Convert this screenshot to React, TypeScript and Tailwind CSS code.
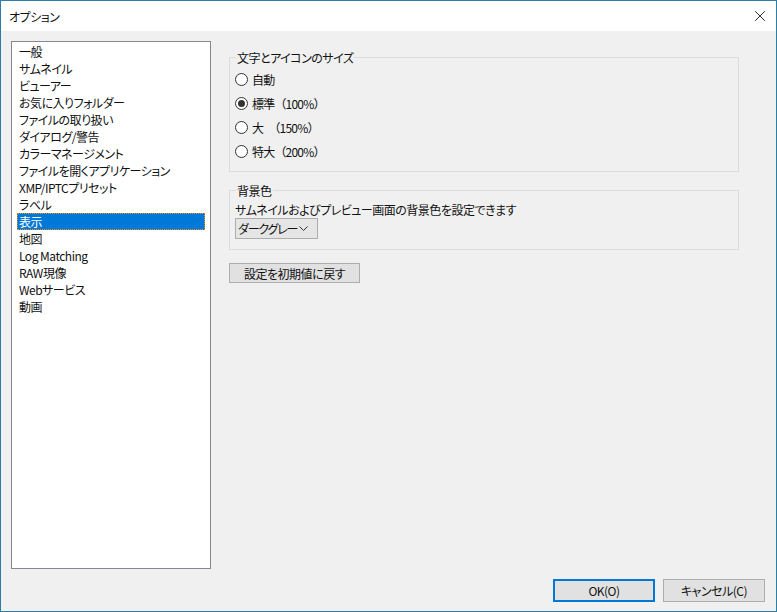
import { X } from "lucide-react";

const menuItems = [
  "一般",
  "サムネイル",
  "ビューアー",
  "お気に入りフォルダー",
  "ファイルの取り扱い",
  "ダイアログ/警告",
  "カラーマネージメント",
  "ファイルを開くアプリケーション",
  "XMP/IPTCプリセット",
  "ラベル",
  "表示",
  "地図",
  "Log Matching",
  "RAW現像",
  "Webサービス",
  "動画",
];

const sizes = [
  { label: "自動", checked: false },
  { label: "標準（100%）", checked: true },
  { label: "大　（150%）", checked: false },
  { label: "特大（200%）", checked: false },
];

const Radio = ({ label, checked }: { label: string; checked: boolean }) => (
  <div className="flex items-center h-[24px]">
    <span className="w-[13px] h-[13px] rounded-full border border-[#333333] bg-white flex items-center justify-center shrink-0">
      {checked && <span className="w-[7px] h-[7px] rounded-full bg-[#333333]" />}
    </span>
    <span className="ml-[4px] whitespace-pre [font-feature-settings:normal] tracking-[-0.8px]">{label}</span>
  </div>
);

const App = () => {
  return (
    <div
      className="w-[777px] h-[612px] border border-[#2b7fa4] bg-[#f0f0f0] flex flex-col text-[12px] leading-[15px] text-[#111] [font-feature-settings:'palt'] tracking-[-0.5px]"
      style={{ fontFamily: '"Noto Sans CJK JP", "Noto Sans", sans-serif' }}
    >
      {/* title bar */}
      <div className="h-[30px] bg-white flex items-center justify-between pl-[8px] pr-[7px] shrink-0">
        <span className="text-[12px]">オプション</span>
        <X size={18} strokeWidth={1.1} className="text-black" />
      </div>

      <div className="flex flex-col px-[10px] pt-[10px] flex-1">
        <div className="flex">
          {/* left list */}
          <div className="w-[200px] h-[528px] border border-[#828790] bg-white pt-[1px] pl-[5px] pr-[5px] shrink-0">
            {menuItems.map((item) => (
              <div
                key={item}
                className={
                  item === "表示"
                    ? "h-[17px] flex items-center px-[1px] bg-[#0078d7] text-white border border-dotted border-[#ff8c00]"
                    : "h-[17px] flex items-center px-[2px] whitespace-nowrap"
                }
              >
                {item}
              </div>
            ))}
          </div>

          {/* right panel */}
          <div className="ml-[18px] w-[510px] pt-[9px]">
            <fieldset className="border border-[#dcdcdc] h-[122px] px-[5px] pt-[2px]">
              <legend className="ml-[1px] px-[1px]">文字とアイコンのサイズ</legend>
              {sizes.map((s) => (
                <Radio key={s.label} label={s.label} checked={s.checked} />
              ))}
            </fieldset>

            <fieldset className="mt-[11px] border border-[#dcdcdc] h-[67px] px-[5px]">
              <legend className="ml-[1px] px-[1px]">背景色</legend>
              <div className="mt-[4px] whitespace-nowrap">サムネイルおよびプレビュー画面の背景色を設定できます</div>
              <div className="mt-[1px] w-[83px] h-[21px] border border-[#adadad] bg-[#e5e5e5] flex items-center pl-[2px] pr-[9px]">
                <span className="whitespace-nowrap tracking-[-1.2px]">ダークグレー</span>
                <svg className="ml-auto shrink-0" width="9" height="5" viewBox="0 0 9 5">
                  <path d="M0.5 0.5 L4.5 4.5 L8.5 0.5" fill="none" stroke="#333" strokeWidth="1" />
                </svg>
              </div>
            </fieldset>

            <button className="mt-[13px] w-[131px] h-[20px] border border-[#adadad] bg-[#e1e1e1] flex items-center justify-center">
              設定を初期値に戻す
            </button>
          </div>
        </div>

        {/* bottom buttons */}
        <div className="flex justify-end gap-[8px] mt-[10px] pr-[1px]">
          <button className="w-[102px] h-[23px] border-2 border-[#0078d7] bg-[#e1e1e1] flex items-center justify-center">
            OK(O)
          </button>
          <button className="w-[102px] h-[23px] border border-[#adadad] bg-[#e1e1e1] flex items-center justify-center">
            キャンセル(C)
          </button>
        </div>
      </div>
    </div>
  );
};

export default App;
